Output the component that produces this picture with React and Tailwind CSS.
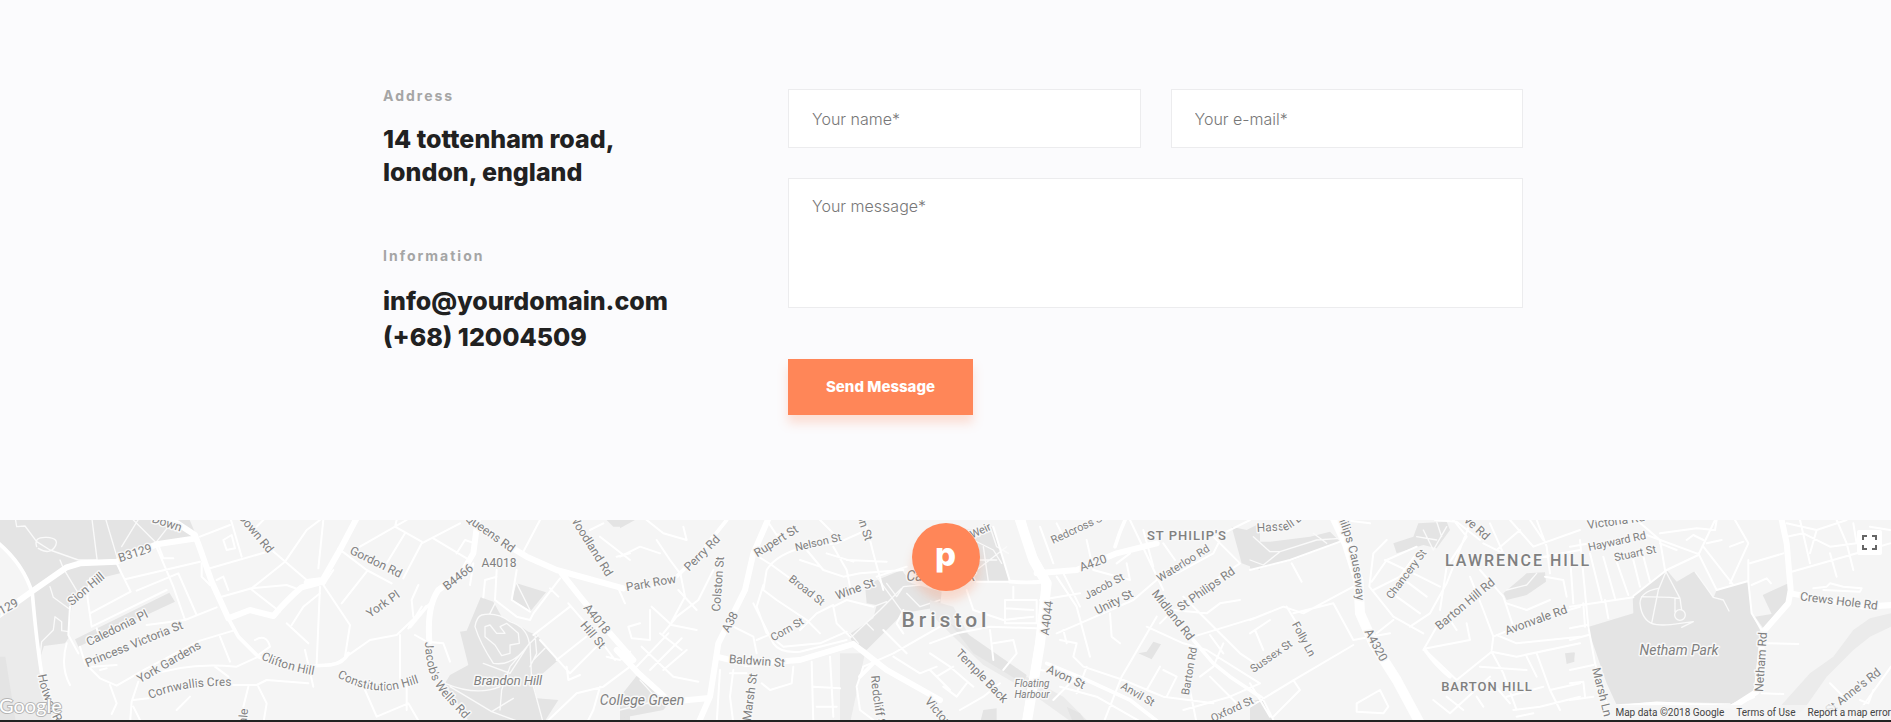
const TILES = [
  {
    x: 0,
    light: ["M0,315 L95,250 L112,430 L175,640 H0Z"],
    parks: [
      "M-10,20 H565 L590,80 L470,100 L350,160 L360,190 L300,205 L215,285 L205,385 L195,400 L132,408 L118,450 L95,250 L60,165 L0,100Z",
      "M0,440 H16 L48,640 H0Z",
      "M225,388 L508,248 L525,275 L235,410Z",
    ],
    minor: [
      "M275,20 L292,155", "M315,20 L355,155", "M390,20 L470,100", "M45,20 L50,50 L75,48 L110,95 L150,120 L235,150 L290,150",
      "M110,110 Q100,80 140,82 T165,110 T115,115", "M365,110 L420,20", "M470,95 L505,50", "M180,150 L190,175 L235,250", "M150,230 L160,262 L205,295",
      "M120,440 L125,395 L160,360 L165,320 L185,335 L185,362 L205,365",
    ],
    streets: [
      "M350,160 L392,245 L270,310", "M465,100 L520,230 L555,330", "M375,208 L600,155", "M410,242 L535,190 L590,315", "M270,205 L262,260 L275,350 L500,240",
      "M290,355 L300,385", "M240,410 L255,460 L300,505 L350,527 L440,475 L600,392 L700,362", "M440,345 L555,330 L650,292", "M660,380 L690,455",
      "M210,290 L205,375 L235,430", "M200,400 Q180,470 210,525", "M330,525 L350,580 L335,612", "M440,500 Q560,455 710,470 L775,440", "M395,575 L415,515",
      "M395,575 L390,640", "M400,590 L425,640", "M400,570 L445,565", "M530,600 L570,560", "M645,470 L685,500 L690,525 L770,525 L800,510 L925,520", "M775,530 L800,580 L790,640",
      "M745,530 L730,590", "M630,175 L820,120", "M690,20 L725,140", "M800,20 L760,60", "M815,120 L920,210 L960,205", "M755,235 L855,155 L920,60 L960,30",
      "M665,260 L755,235 L860,225 L900,240", "M750,235 L840,305", "M605,160 L605,200 L630,225", "M650,210 L670,200 L685,240", "M670,90 L695,75 L705,115 L680,120Z",
      "M600,80 L690,45", "M475,105 L490,145 L520,145", "M860,340 L925,400", "M875,345 L910,290 L960,250", "M765,390 Q800,370 810,410 L775,435", "M915,420 L940,530",
      "M275,470 L350,465 M300,480 L320,475",
    ],
    mid: ["M-10,95 Q70,160 97,250 Q110,400 125,490 T190,650", "M685,325 L715,380 L775,440 L840,470"],
    major: ["M-10,320 L95,245 L200,172 L240,160 L350,155 L470,103 L580,86", "M440,15 L520,32 L585,75 L605,130 L635,215 L685,325 L750,300 L820,318 Q860,270 905,232 L970,215"],
  },
  {
    x: 310,
    parks: [
      "M512,262 L550,275 L575,320 L625,345 L655,365 L680,375 L745,450 L670,515 L680,565 L745,570 L700,640 H480 L405,520 L420,495 L475,465 L450,365 L470,362Z",
      "M620,220 L708,247 L662,303 L605,270Z",
      "M890,30 L910,50 H935 L960,35 V20 H885Z", "M930,600 L960,585 V640 H930Z",
    ],
    minor: [
      "M515,315 Q560,305 600,335 Q650,350 658,400 Q610,470 550,460 Q510,400 495,350 Q500,320 515,315Z",
      "M525,350 L540,345 L560,370 L585,370 L570,350 L590,340 L625,370 L628,400 L600,405 L600,430 L575,437 L555,405 L525,380Z",
      "M655,405 L600,470 L575,540 L570,600", "M660,400 L665,510 L700,640", "M520,460 L600,490 L655,405", "M405,520 Q500,560 570,530", "M420,530 L545,605 L640,640",
      "M620,220 L660,300", "M555,280 L540,310", "M675,375 L680,430 L660,470", "M545,605 L610,565", "M670,450 L705,415", "M685,375 L660,400",
    ],
    streets: [
      "M40,30 L25,175", "M70,180 L40,225 L120,345 L105,440", "M150,110 L290,30", "M170,185 L95,280", "M85,115 L170,180 L245,220", "M280,205 L335,100 L450,40",
      "M260,30 L255,50 L335,95 M285,70 L230,160", "M0,470 L80,460 L180,390 L260,375 L365,275", "M270,375 V510", "M290,520 L290,600 M165,540 L200,620 L295,580 L330,640",
      "M295,355 L335,290 M310,320 L305,270 L325,225", "M315,375 L350,395 L400,400 L420,455", "M370,85 L470,145", "M440,130 L465,90 L495,100", "M470,200 L490,160 L480,225",
      "M560,180 L555,270 L620,320 L660,330 L670,310 L750,205", "M520,262 L525,210 L560,200", "M620,180 L605,270 L660,305", "M640,125 L690,30", "M670,375 L780,290", "M690,390 L780,490 L860,410",
      "M775,280 L870,390 L915,450", "M740,450 L880,340", "M720,235 L745,260", "M705,640 L800,550 L880,530 L960,470", "M770,470 L775,510 L810,495", "M870,530 L850,600 L830,640",
      "M925,235 L945,280 M890,440 L930,450 L960,425", "M920,140 L960,130", "M840,60 L880,40 M870,80 L960,150", "M30,230 L20,460",
    ],
    mid: ["M0,468 L60,465 Q100,460 115,430", "M350,290 L300,350"],
    major: ["M145,15 L95,110 L35,215 L-10,218", "M505,15 L490,130 L455,190 L385,240 Q350,290 358,395", "M600,110 L650,140 L740,180 L940,235", "M755,190 L810,260 L900,370 L970,450"],
  },
  {
    x: 620,
    light: ["M660,430 L735,430 L690,640 H660Z"],
    parks: [
      "M735,225 L845,180 L875,220 L965,245 L960,290 L850,310 L740,420 L700,400 L685,375 L760,325 L770,285 L740,280Z",
      "M52,495 L110,545 L150,575 L130,600 L0,625 V560 Z", "M0,30 H45 L0,55Z",
    ],
    minor: ["M845,235 L780,300 L690,385", "M770,200 L850,310", "M860,250 L900,290 L960,270", "M690,370 L715,400", "M60,510 L105,560 M0,600 L120,570", "M800,220 L830,260 L850,230 L900,225", "M740,340 L760,360 M760,290 L800,275"],
    streets: [
      "M0,140 L60,110 L120,130", "M80,30 L130,70 L200,90 L190,50", "M110,90 L150,150 L180,190", "M180,185 L195,260 L155,335", "M280,180 L235,270 L170,320 L130,370",
      "M60,340 L25,350 L35,385 L90,390 L90,300", "M95,290 L155,345 L230,360 M120,370 L185,420 M65,410 L160,500 L235,515", "M50,470 L145,370 M90,480 L185,385 M130,480 L200,420",
      "M175,240 L230,300", "M440,30 L470,75 L520,60", "M400,130 L455,165 L600,270", "M430,240 L440,180 Q470,130 560,110 L650,100 L740,60", "M430,240 L470,270 L560,330 L600,370",
      "M430,225 L410,290 L440,370 L490,410 L600,400 L680,365", "M400,280 L460,400 Q480,430 540,425 L680,390", "M340,350 L400,380 L410,430 M410,390 L470,365", "M540,360 L590,310 L640,285",
      "M640,290 L650,340 L690,380", "M640,290 L680,270 L760,290", "M560,120 L610,180 L670,200 L720,190 L850,180", "M540,150 L600,170 M640,110 L680,180 L690,230", "M600,30 L640,70",
      "M735,30 L760,130 L790,240", "M680,150 L800,155 M620,130 L700,155", "M770,200 L860,170", "M575,455 L580,640", "M630,440 L640,620", "M520,470 L515,520 L450,540 L425,520",
      "M340,480 L330,560 L340,640", "M580,530 L660,535", "M590,590 L650,590", "M730,470 L710,530 L720,600 L760,630", "M730,470 L820,430 L960,350", "M790,360 L860,430", "M820,440 L900,490 L950,470",
      "M850,300 L830,340 L850,370", "M330,490 L380,490 M300,480 L290,640",
    ],
    mid: ["M720,500 L760,460 M555,445 L700,400", "M320,30 L240,130 L170,200 L100,230"],
    major: ["M450,15 L400,130 L375,240 L320,350 L295,400 L270,560 L235,640", "M-10,420 L55,490 L150,575 L260,565", "M290,440 L380,462 L540,450 L700,402", "M700,402 L800,480 L960,570"],
  },
  {
    x: 930,
    light: ["M0,270 L70,290 L130,400 L290,500 L400,560 L480,640 H430 L290,540 L160,465 L60,370 L0,310Z"],
    parks: ["M100,60 L185,50 L215,130 L238,215 L120,215Z", "M905,50 L950,60 L990,40 V180 L935,160Z", "M60,340 L110,370 L290,495 L280,520 L130,430Z", "M670,395 L693,403 L665,448 L625,430 L650,425Z", "M160,600 L200,595 V640 H150Z", "M410,590 L450,610 L470,640 H430Z"],
    minor: ["M130,90 L190,120 L215,160", "M160,110 L175,215", "M140,180 L230,110", "M180,50 L200,110 L235,130 M120,150 L200,150"],
    streets: [
      "M140,215 L330,215", "M110,240 L130,300 L220,330 L310,320", "M225,270 H320 V340 H225Z M225,295 L310,300 M250,265 V230", "M0,400 L80,370 L180,350 L320,355", "M0,430 L60,470 L130,530",
      "M20,500 L70,470 M40,530 L80,560 L110,520 M0,480 L60,540 M90,600 L160,560 L210,520", "M180,360 L190,450 M190,400 L250,390 L260,430 L220,480", "M190,50 L240,215", "M380,200 L440,290 L480,440",
      "M400,190 L450,290 M330,270 L450,250 M380,370 L450,340 L610,270 L680,210", "M380,40 L400,80 L440,60 M330,50 L370,160", "M470,90 L490,180 L600,210 L590,160 M560,160 L600,130",
      "M600,30 L700,240", "M640,60 L670,170", "M680,205 L740,190 L850,130 L870,90", "M850,80 L930,160 L780,260", "M860,80 L960,30", "M735,150 L700,100",
      "M680,320 L575,500 L520,640", "M650,350 L760,400 L830,420 L990,520", "M760,260 L830,330 L930,430 L990,470", "M790,380 L970,325 M840,375 L880,430 M690,340 L730,300 L830,310 L870,280 L930,270",
      "M390,390 L440,400 L430,440 L460,470 L580,510 L700,560 L850,580", "M400,360 L410,400 M540,310 L545,380 L570,400", "M690,470 L650,540 L700,560 M700,480 L740,500 L710,560",
      "M440,500 L370,570 M390,530 L500,560 L640,640", "M470,470 L440,550", "M780,540 L800,640 M760,600 L900,560 L990,520 M840,500 L920,580", "M880,400 L850,470 L810,500", "M330,480 L400,490",
    ],
    mid: ["M790,390 L850,460 L900,500 L990,560", "M350,460 L470,510 L600,570 L690,640", "M590,20 Q570,60 555,110 M240,215 Q290,220 340,215"],
    major: ["M275,15 L295,110 L340,190 L345,260 L320,430 L285,640", "M320,190 L440,180 L560,130 L680,100"],
    wide: ["M265,15 L310,150 L350,220 L330,400 L290,640"],
  },
  {
    x: 1250,
    parks: ["M0,95 L60,95 L180,80 L240,65 L270,95 L130,150 L10,180 L0,175Z", "M430,100 L490,80 L505,40 L590,35 L600,60 L560,115 L520,105 L440,130Z", "M770,270 L760,250 L830,190 L885,187 L888,215 L830,255Z", "M0,575 L40,565 L75,640 H0Z", "M945,430 L973,427 V455 L950,462Z"],
    minor: ["M0,150 L40,165 L90,125 L200,90 L270,85", "M10,80 L60,125 L90,125", "M500,80 L560,90 M520,60 L550,120 L590,50 M560,35 L575,80", "M770,240 L830,225 L860,190", "M190,70 L230,100"],
    streets: [
      "M0,180 L120,150 L270,95", "M125,160 L155,215", "M0,330 L100,290 L160,310 L310,230", "M110,290 L140,340 M130,310 L250,280 L310,390 L420,370", "M15,360 L40,420 M0,370 L60,330",
      "M0,590 L140,505 L310,405", "M130,510 L150,540 L70,620", "M0,520 L60,620 M35,560 L75,640", "M280,30 L360,40", "M410,90 L370,130 L358,230 L430,320 L520,370",
      "M365,215 L410,150 L500,110", "M405,150 L510,200 L570,230 M450,200 L530,260 M440,260 L510,310 M370,240 L450,200 L500,130", "M430,330 L380,370 M480,350 L540,310 L590,220 L660,40",
      "M610,30 L650,80 L590,170 L570,300", "M520,420 L560,350 L620,300", "M525,420 L620,510 M530,415 L660,390 L650,340", "M620,510 L725,425 L760,490 L800,600", "M600,330 L620,360",
      "M660,200 L700,300 L730,380 L725,420", "M690,180 L760,260 L790,350", "M730,380 L850,330 L990,290", "M740,375 L800,400 L990,380", "M725,425 L800,440 L990,400",
      "M745,130 L830,150 L990,120", "M780,30 L850,110 L990,60 M840,30 L880,90 M720,40 L760,130 L700,100", "M740,120 L810,60 M860,30 L890,110 L900,190", "M885,200 L940,210 L950,260 M960,140 L970,280",
      "M860,430 L900,540 L990,520 M900,540 L930,600 M770,560 L880,530", "M320,580 L390,540 L415,590 L400,610 L320,605Z", "M550,570 L600,610 L720,500 M590,560 L640,600", "M720,510 L780,580 M680,560 L700,590",
      "M790,600 L870,590 L990,560", "M800,620 L850,610 M690,470 L830,480 M830,440 L860,500", "M555,30 L620,35 L690,90 M770,280 L830,300 L900,270",
    ],
    mid: ["M525,420 Q560,470 600,500"],
    major: [],
    wide: ["M250,15 L290,100 L325,210 L330,310 L370,400 L440,510 L510,640"],
  },
  {
    x: 1570,
    light: ["M963,310 L900,325 L850,360 L790,440 L720,490 L630,590 L640,640 L700,600 L770,500 L850,420 L900,380 L963,350Z"],
    parks: [
      "M52,352 L190,310 L188,258 L290,180 L320,215 L375,183 L430,265 L440,240 L535,213 L545,310 L570,360 L555,545 L480,585 L140,585 L110,520Z",
      "M578,255 L655,220 L660,260 L580,355 L555,320 L605,312Z", "M0,430 L15,428 L10,455 H0Z",
    ],
    minor: [
      "M290,180 L265,240 L245,340 Q270,350 330,340 L370,335 L335,352", "M265,235 Q210,245 210,280 Q215,330 250,342", "M215,260 L300,262 L330,265", "M285,180 L330,265 L335,300",
      "M330,300 m-16,15 a16,16 0 1,0 32,0 a16,16 0 1,0 -32,0", "M315,305 L315,265 L330,265", "M375,185 L430,262 L460,270 L477,303", "M140,585 L260,578 L480,582",
    ],
    streets: [
      "M30,90 L55,350", "M60,130 L95,270", "M100,140 L135,265", "M140,155 L175,255", "M0,290 L190,262", "M190,258 L290,180 L385,135 L435,30", "M190,150 L210,230 M215,120 L240,215",
      "M0,110 L60,100 M200,30 L270,90 L285,180 M230,75 L380,130 M270,100 L320,120", "M270,70 L380,55 L435,60 L440,30", "M350,90 L370,75 L400,90 M410,100 L455,90", "M385,130 L440,240",
      "M400,110 L490,225", "M440,240 L535,213", "M480,220 L535,100 L495,30", "M540,160 L640,130 M480,110 L520,95", "M535,150 L535,215 L545,310 L575,360", "M545,225 L590,205 L603,220",
      "M0,355 L50,345 M55,350 L75,460 L110,580", "M0,390 L55,375 M0,480 L70,465 M0,520 L40,515 L45,560 M0,570 L70,560", "M40,280 L45,350 M105,270 L115,325",
      "M665,185 L860,130 L960,100", "M650,40 L740,60 L830,30 M650,80 L700,70 L780,110 L860,100 L850,40", "M690,30 L720,160 M740,60 L720,130 M800,30 L830,100 L850,180 M780,130 L800,200 M900,50 L960,60",
      "M590,400 L685,402", "M730,235 L770,230 L780,220 L820,230 L875,235 L870,245 L760,240", "M780,520 L830,570 M870,600 L963,470 M575,550 L640,552 M870,570 L895,580 L910,540",
    ],
    mid: ["M150,590 L260,580 L480,590 L550,560"],
    major: ["M632,15 L650,100 L662,240 L655,280 L580,365 L560,545 L490,590", "M662,250 L760,268 L880,290 L970,285"],
  },
];

const LABELS = [
  ["Down", 167, 3, 18], ["B3129", 135, 33, -18], ["Down Rd", 256, 13, 50], ["Sion Hill", 86, 69, -40], ["B3129", 2, 90, -28],
  ["Caledonia Pl", 117, 108, -26], ["Princess Victoria St", 134, 124, -22], ["York Gardens", 169, 142, -30], ["Vale", 243, 200, -85],
  ["Gordon Rd", 376, 42, 26], ["York Pl", 383, 84, -35], ["Queens Rd", 490, 13, 35], ["B4466", 458, 57, -38], ["A4018", 499, 43, 0],
  ["Woodland Rd", 591, 25, 58], ["A4018", 597, 99, 51], ["Hill St", 593, 115, 50],
  ["Park Row", 651, 63, -10], ["Perry Rd", 702, 33, -45], ["Colston St", 718, 64, -86], ["A38", 730, 102, -62], ["Rupert St", 776, 21, -32],
  ["Union St", 862, -1, 72], ["Wine St", 855, 69, -20], ["Baldwin St", 757, 141, 4], ["Marsh St", 750, 177, -82], ["Victoria St", 945, 200, 50],
  ["A420", 1093, 43, -20], ["Unity St", 1114, 82, -27], ["A4044", 1047, 98, -83], ["St Philips Rd", 1206, 69, -35], ["Midland Rd", 1173, 95, 52],
  ["Avon St", 1066, 157, 25], ["Temple Back", 982, 156, 46], ["A4320", 1376, 125, 62], ["ve Rd", 1477, 8, 42], ["Barton Hill Rd", 1465, 84, -40],
  ["Avonvale Rd", 1536, 100, -20], ["Victoria Rd", 1616, 1, -8], ["Crews Hole Rd", 1839, 81, 7], ["Netham Rd", 1761, 142, -86],
  ["Marsh Ln", 1602, 172, 76], ["St Anne's Rd", 1853, 171, -38],
];

const SMALL_LABELS = [
  ["Nelson St", 818, 22, -13], ["Broad St", 807, 70, 38], ["Corn St", 787, 109, -30], ["Broad Weir", 966, 17, -25], ["Redcross St", 1078, 8, -25],
  ["Jacob St", 1104, 66, -28], ["Waterloo Rd", 1183, 43, -32], ["Barton Rd", 1189, 151, -80], ["Anvil St", 1138, 174, 30], ["Oxford St", 1232, 189, -25],
  ["Sussex St", 1271, 136, -35], ["Folly Ln", 1304, 119, 62], ["Chancery St", 1406, 54, -53], ["Hayward Rd", 1617, 21, -12], ["Stuart St", 1635, 33, -12],
];

const CURVED = [
  ["cornwallis", "Cornwallis Cres", "M150,179 Q190,162 250,167"],
  ["clifton", "Clifton Hill", "M261,139 Q285,152 340,159"],
  ["hotwell", "Hotwell Rd", "M38,155 C41,175 50,192 66,224"],
  ["constitution", "Constitution Hill", "M337,157 Q365,173 392,170 Q410,167 440,155"],
  ["jacobs", "Jacob's Wells Rd", "M425,122 C426,148 431,162 443,176 L478,214"],
  ["redcliff", "Redcliff St", "M871,156 Q873,185 882,225"],
  ["causeway", "Philips Causeway", "M1335,-10 C1347,20 1356,45 1357,95"],
  ["hassell", "Hassell Dr", "M1257,12 L1287,10 Q1294,7 1312,-8"],
];

function MapLabels({ items, className }) {
  return items.map(([text, x, y, angle]) => (
    <text key={text + x} className={className} textAnchor="middle" dy="4" transform={`translate(${x} ${y}) rotate(${angle})`}>
      {text}
    </text>
  ));
}

function CityMap() {
  return (
    <svg className="block h-full w-full bg-[#f5f5f5] font-['Roboto',sans-serif]" viewBox="0 0 1891 200" preserveAspectRatio="xMidYMid slice" role="img" aria-label="Map of Bristol">
      <g fill="none" strokeLinejoin="round" strokeLinecap="round">
        {TILES.map((t) => (
          <g key={t.x} transform={`translate(${t.x} -10) scale(0.33333)`}>
            {t.light && <path d={t.light.join(" ")} fill="#ebebeb" />}
            <path d={t.parks.join(" ")} fill="#e4e4e4" />
            <path d={t.minor.join(" ")} stroke="#fafafa" strokeWidth="4" />
          </g>
        ))}
        {TILES.map((t) => (
          <g key={t.x} transform={`translate(${t.x} -10) scale(0.33333)`} stroke="#ffffff">
            <path d={t.streets.join(" ")} strokeWidth="6" />
            <path d={t.mid.join(" ")} strokeWidth="11" />
            <path d={t.major.join(" ")} strokeWidth="18" />
            {t.wide && <path d={t.wide.join(" ")} strokeWidth="30" />}
          </g>
        ))}
      </g>
      <g fill="#808080" stroke="#f8f8f8" strokeWidth="3" strokeLinejoin="round" paintOrder="stroke">
        <MapLabels items={LABELS} className="text-[12px]" />
        <MapLabels items={SMALL_LABELS} className="text-[11px]" />
        {CURVED.map(([id, text, d]) => (
          <g key={id}>
            <path id={id} d={d} fill="none" stroke="none" />
            <text className="text-[12px]"><textPath href={`#${id}`}>{text}</textPath></text>
          </g>
        ))}
        <g textAnchor="middle" className="italic">
          <text x="508" y="165" className="text-[13px]">Brandon Hill</text>
          <text x="642" y="185" className="text-[14px]">College Green</text>
          <text x="941" y="61" className="text-[14px]">Castle Park</text>
          <text x="1679" y="135" className="text-[14px]">Netham Park</text>
          <text x="1032" y="167" className="text-[10px]">Floating</text>
          <text x="1032" y="178" className="text-[10px]">Harbour</text>
        </g>
        <g textAnchor="middle" className="font-medium">
          <text x="946" y="107" className="text-[21px] tracking-[4px]">Bristol</text>
          <text x="1187" y="20" className="text-[13px] tracking-[1px]">ST PHILIP'S</text>
          <text x="1518" y="46" className="text-[16px] tracking-[2px]">LAWRENCE HILL</text>
          <text x="1487" y="171" className="text-[13px] tracking-[1px]">BARTON HILL</text>
        </g>
      </g>
      <text x="-1" y="193" className="text-[20px] font-['Lato',sans-serif]" fill="#ffffff" stroke="#b5b5b5" strokeWidth="2" paintOrder="stroke">Google</text>
    </svg>
  );
}

function InfoBlock({ title, children }) {
  return (
    <section>
      <h2 className="text-[14px] leading-[14px] font-bold tracking-[2px] text-[#a5a5a5]">{title}</h2>
      <div className="mt-5 text-[25px] font-extrabold text-[#212121]">{children}</div>
    </section>
  );
}

const FIELD = "block w-full border border-[#ececee] bg-white px-[23px] text-[16px] font-light text-[#777777] outline-none placeholder:text-[#777777] focus:border-[#ff8658]";

export default function App() {
  return (
    <div className="bg-[#fbfbfd] font-['Inter',sans-serif]">
      <main className="mx-auto grid max-w-[1155px] grid-cols-[405fr_735fr] pt-[89px] pb-[105px] pl-[15px]">
        <div className="flex flex-col gap-[60px]">
          <InfoBlock title="Address">
            <address className="leading-[33px] not-italic">14 tottenham road,<br />london, england</address>
          </InfoBlock>
          <InfoBlock title="Information">
            <p className="leading-[36px]">
              <a href="mailto:info@yourdomain.com">info@yourdomain.com</a><br />
              <a href="tel:+6812004509">(+68) 12004509</a>
            </p>
          </InfoBlock>
        </div>
        <form className="grid grid-cols-2 gap-[30px]" onSubmit={(e) => e.preventDefault()}>
          <div>
            <label htmlFor="name" className="sr-only">Your name</label>
            <input id="name" type="text" placeholder="Your name*" className={`${FIELD} h-[59px]`} />
          </div>
          <div>
            <label htmlFor="email" className="sr-only">Your e-mail</label>
            <input id="email" type="email" placeholder="Your e-mail*" className={`${FIELD} h-[59px]`} />
          </div>
          <div className="col-span-2">
            <label htmlFor="message" className="sr-only">Your message</label>
            <textarea id="message" placeholder="Your message*" className={`${FIELD} h-[130px] resize-none py-4 leading-[22px]`} />
          </div>
          <div className="col-span-2 pt-[21px]">
            <button type="submit" className="h-14 w-[185px] bg-[#ff8658] text-[15px] font-extrabold text-white shadow-[0_8px_10px_rgba(255,134,88,0.25)]">Send Message</button>
          </div>
        </form>
      </main>
      <section className="relative h-[200px] overflow-hidden">
        <CityMap />
        <button type="button" aria-label="Our office" className="absolute top-[3px] left-1/2 flex size-[68px] -translate-x-1/2 items-center justify-center rounded-full bg-[#ff8658] pb-1.5 text-[33px] leading-none font-extrabold text-white shadow-[0_10px_10px_rgba(255,134,88,0.25)]">p</button>
        <button type="button" aria-label="Toggle fullscreen view" className="absolute top-[10px] right-[9px] flex size-[25px] items-center justify-center rounded-xs bg-white">
          <svg viewBox="0 0 15 15" className="size-[15px]" fill="none" stroke="#666666" strokeWidth="2"><path d="M1 5V1H5M10 1H14V5M14 10V14H10M5 14H1V10" /></svg>
        </button>
        <div className="absolute right-0 bottom-0 flex h-[15px] items-center gap-3 bg-[#f5f5f5]/80 pl-1 font-['Roboto',sans-serif] text-[10px] text-[#444444]">
          <span>Map data ©2018 Google</span>
          <a href="#terms">Terms of Use</a>
          <a href="#report">Report a map error</a>
        </div>
      </section>
      <div className="h-[2px] bg-[#222222]" />
    </div>
  );
}
